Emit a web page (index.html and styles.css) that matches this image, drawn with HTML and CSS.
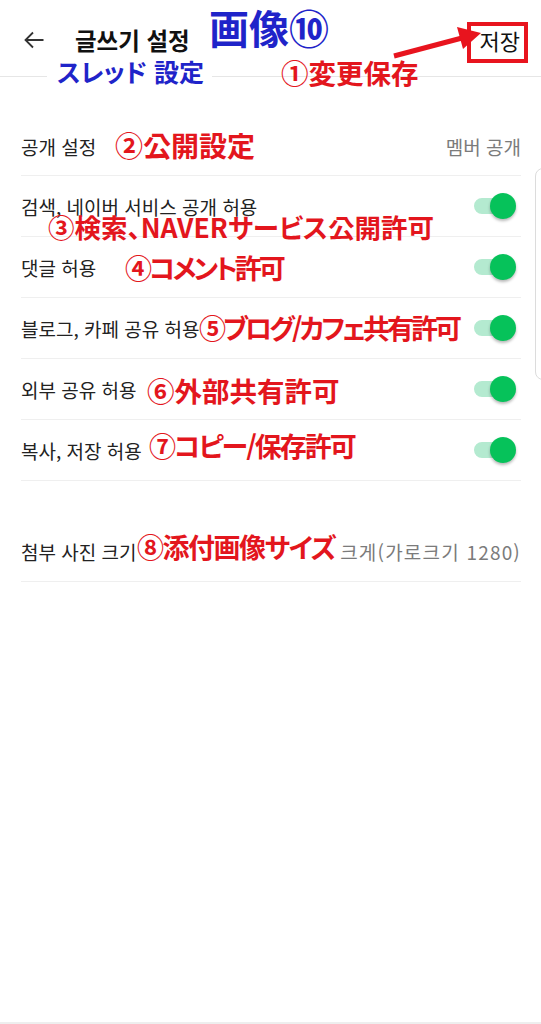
FILE: index.html
```html
<!DOCTYPE html>
<html lang="ko">
<head>
  <meta charset="UTF-8" />
  <meta name="viewport" content="width=device-width, initial-scale=1.0" />
  <title>글쓰기 설정</title>
  <link rel="stylesheet" href="styles.css">
</head>
<body>
  <div class="screen">
    <header class="topbar">
      <span class="back">
        <svg width="24" height="24" viewBox="0 0 24 24"><path d="M21.5 12H3.5M11 4.5 3.5 12l7.5 7.5" fill="none" stroke="#333" stroke-width="1.8"/></svg>
      </span>
      <h1 class="title">글쓰기 설정</h1>
      <span class="save">저장</span>

      <span class="note note-blue note-img">画像⑩</span>
      <span class="note note-blue note-thread">スレッド 設定</span>
      <span class="note note-red note-save">①変更保存</span>
      <span class="mark-box"></span>
      <svg class="mark-arrow" width="100" height="45" viewBox="385 20 100 45">
        <path d="M394 56 462 38" stroke="#e8141e" stroke-width="5" fill="none"/>
        <polygon points="481,33 463,49 457,27" fill="#e8141e"/>
      </svg>
    </header>

    <ul class="settings">
      <li class="row row-first">
        <span class="label">공개 설정</span>
        <span class="value">멤버 공개</span>
        <span class="note note-red n2">②公開設定</span>
      </li>
      <li class="row">
        <span class="label">검색, 네이버 서비스 공개 허용</span>
        <span class="toggle"><span class="knob"></span></span>
        <span class="note note-red n3">③検索、NAVERサービス公開許可</span>
      </li>
      <li class="row">
        <span class="label">댓글 허용</span>
        <span class="toggle"><span class="knob"></span></span>
        <span class="note note-red n4">④コメント許可</span>
      </li>
      <li class="row">
        <span class="label">블로그, 카페 공유 허용</span>
        <span class="toggle"><span class="knob"></span></span>
        <span class="note note-red n5">⑤ブログ/カフェ共有許可</span>
      </li>
      <li class="row">
        <span class="label">외부 공유 허용</span>
        <span class="toggle"><span class="knob"></span></span>
        <span class="note note-red n6">⑥外部共有許可</span>
      </li>
      <li class="row">
        <span class="label">복사, 저장 허용</span>
        <span class="toggle"><span class="knob"></span></span>
        <span class="note note-red n7">⑦コピー/保存許可</span>
      </li>
    </ul>

    <ul class="settings settings-photo">
      <li class="row">
        <span class="label">첨부 사진 크기</span>
        <span class="value value-wide">크게(가로크기 1280)</span>
        <span class="note note-red n8">⑧添付画像サイズ</span>
      </li>
    </ul>

    <div class="edge"></div>
  </div>
</body>
</html>
```

FILE: styles.css
```css
* {
  box-sizing: border-box;
}
body {
  margin: 0;
  background: #fff;
  font-family: "Noto Sans CJK KR", "Noto Sans", sans-serif;
  color: #222;
}
.screen {
  position: relative;
  height: 1024px;
  overflow: hidden;
  border-bottom: 2px solid #eeeeee;
}

/* header */
.topbar {
  position: relative;
  display: flex;
  align-items: center;
  height: 77px;
  padding-top: 4px;
  border-bottom: 1px solid #e6e6e6;
}
.back {
  display: flex;
  margin-left: 22px;
}
.title {
  margin: 0 0 0 29px;
  font-size: 23.5px;
  font-weight: 700;
  color: #111;
}
.save {
  margin-left: auto;
  margin-right: 21px;
  font-size: 22px;
  color: #111;
}

/* annotations drawn on the screenshot */
.note {
  position: absolute;
  line-height: 1;
  white-space: nowrap;
  font-family: "Noto Sans CJK JP", sans-serif;
  font-feature-settings: "palt";
  font-weight: 700;
}
.note-red {
  color: #e3161d;
  font-size: 27px;
}
.note-blue {
  color: #1f24c9;
}
.note-img {
  left: 209px;
  top: 7px;
  font-size: 40px;
}
.note-thread {
  left: 47px;
  top: 59px;
  padding: 0 8px 2px 10px;
  background: #fff;
  font-size: 25px;
}
.note-save {
  left: 281px;
  top: 59px;
  font-size: 27.5px;
}
.mark-box {
  position: absolute;
  left: 467px;
  top: 22px;
  width: 61px;
  height: 41px;
  border: 4px solid #e8141e;
}
.mark-arrow {
  position: absolute;
  left: 385px;
  top: 20px;
}

/* settings list */
.settings {
  list-style: none;
  margin: 0;
  padding: 0 20px 0 21px;
}
.settings-photo {
  margin-top: 40px;
}
.row {
  position: relative;
  display: flex;
  align-items: center;
  height: 61px;
  border-bottom: 1px solid #efefef;
}
.row-first {
  margin-top: 38px;
  padding-top: 2px;
}
.label {
  font-size: 19px;
  color: #222;
}
.value {
  margin-left: auto;
  font-size: 19px;
  color: #7b7b7b;
}
.value-wide {
  letter-spacing: 1.2px;
}
.toggle {
  position: relative;
  margin-left: auto;
  margin-right: 5px;
  width: 42px;
  height: 26px;
}
.toggle::before {
  content: "";
  position: absolute;
  left: 0;
  top: 5px;
  width: 38px;
  height: 16px;
  border-radius: 8px;
  background: #b4ead0;
}
.knob {
  position: absolute;
  right: 0;
  top: 0;
  width: 26px;
  height: 26px;
  border-radius: 50%;
  background: #06c25a;
  box-shadow: 0 2px 3px rgba(0, 0, 0, 0.28);
}
.n2 { left: 94px; top: 16px; font-size: 28px; }
.n3 { left: 27px; top: 38px; font-size: 26.5px; }
.n4 { left: 104px; top: 17px; letter-spacing: -3px; }
.n5 { left: 178px; top: 16px; letter-spacing: -3px; }
.n6 { left: 126px; top: 18px; font-size: 27.5px; }
.n7 { left: 128px; top: 12px; letter-spacing: -2px; }
.n8 { left: 116px; top: 12px; letter-spacing: -1.5px; }

.edge {
  position: absolute;
  left: 535px;
  top: 168px;
  width: 20px;
  height: 212px;
  border: 1px solid #dcdcdc;
  border-radius: 8px;
}
```
